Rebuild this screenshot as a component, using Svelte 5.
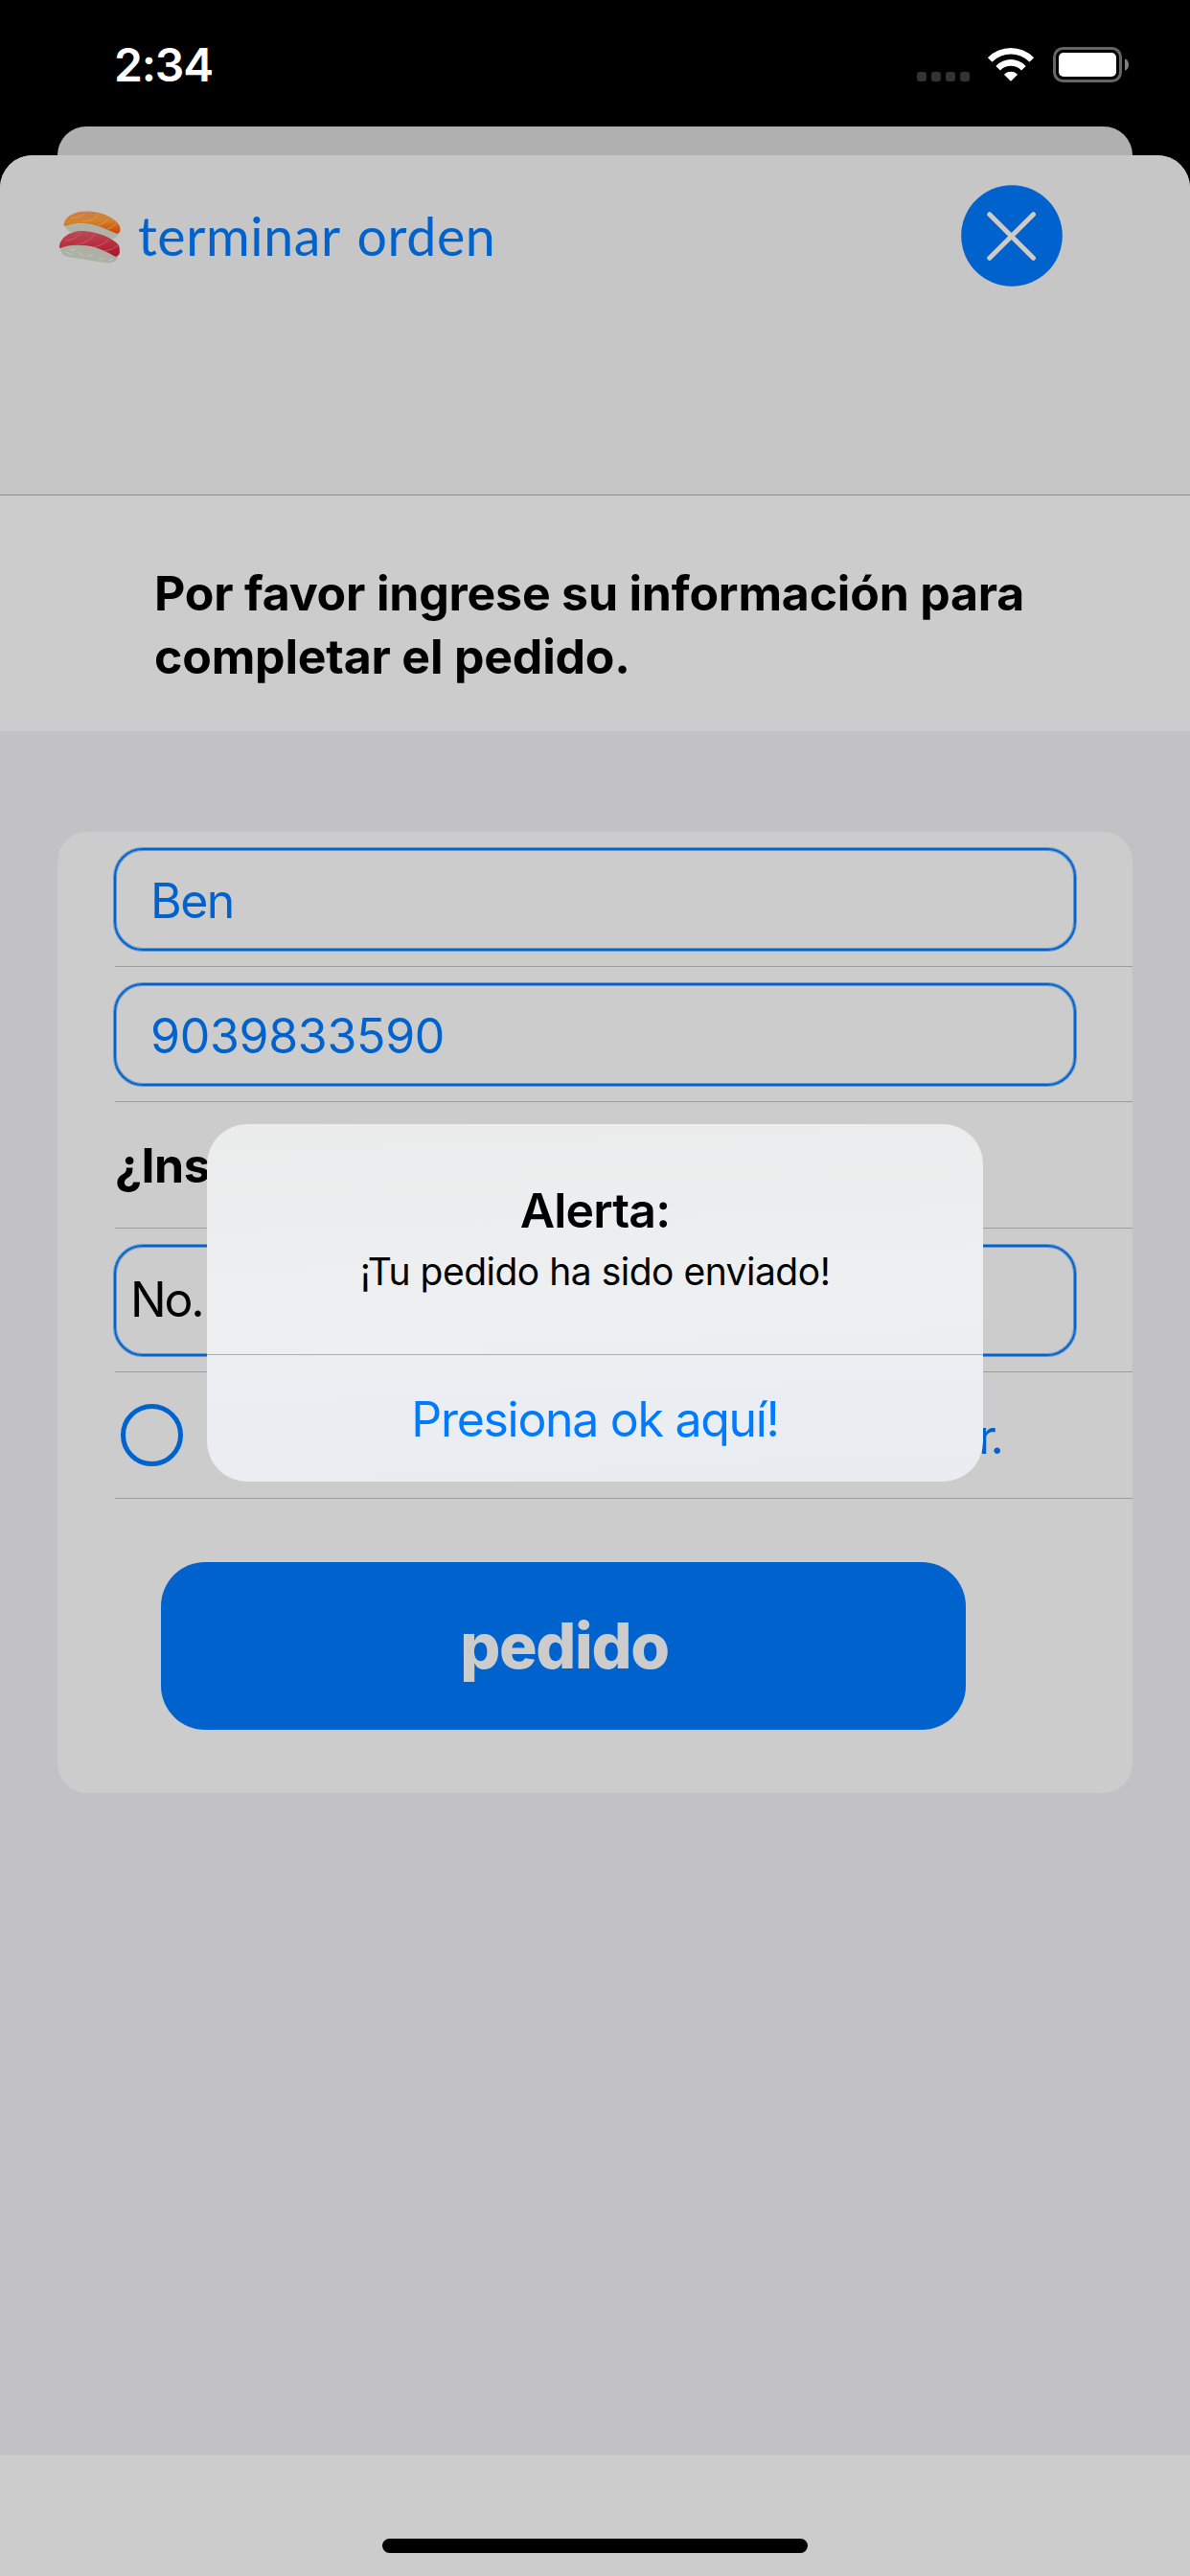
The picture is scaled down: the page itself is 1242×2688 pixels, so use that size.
<script>
  const fields = [
    { kind: 'name', value: 'Ben' },
    { kind: 'phone', value: '9039833590' }
  ];
</script>

<div class="screen">
  <header class="status">
    <span class="time">2:34</span>
    <div class="indicators">
      <div class="dots"><i></i><i></i><i></i><i></i></div>
      <svg class="wifi" width="50" height="38" viewBox="0 0 50 38" aria-hidden="true">
        <path d="M1.4 10.8A33.5 33.5 0 0 1 48.6 10.8Q49.1 11.3 48.6 11.8L45 15.2Q44.5 15.7 44 15.2A27 27 0 0 0 6 15.2Q5.5 15.7 5 15.2L1.4 11.8Q.9 11.3 1.4 10.8Z" />
        <path d="M9.8 19.4A21.3 21.3 0 0 1 40.2 19.4Q40.7 19.9 40.2 20.4L36.5 24Q36 24.5 35.5 24A15.2 15.2 0 0 0 14.5 24Q14 24.5 13.5 24L9.8 20.4Q9.3 19.9 9.8 19.4Z" />
        <path d="M18.4 28.2A10 10 0 0 1 31.6 28.2Q32.1 28.7 31.6 29.2L25.6 35.2Q25 35.8 24.4 35.2L18.4 29.2Q17.9 28.7 18.4 28.2Z" />
      </svg>
      <svg class="battery" width="80" height="38" viewBox="0 0 80 38" aria-hidden="true">
        <rect x="1.5" y="1.5" width="69" height="34" rx="9" fill="none" stroke="#666" stroke-width="3" />
        <rect x="6" y="6" width="60" height="25" rx="5" fill="#fff" />
        <path d="M75 12.2C77.5 13.2 79 15.5 79 18.5S77.5 23.8 75 24.8Z" fill="#808080" />
      </svg>
    </div>
  </header>

  <div class="peek"></div>

  <main class="sheet">
    <section class="bar">
      <div class="brand">
        <svg class="sushi" width="66" height="57" viewBox="0 0 66 57" aria-hidden="true">
          <defs>
            <linearGradient id="salmon" x1="0" y1="0" x2="0.15" y2="1">
              <stop offset="0" stop-color="#c97a55" />
              <stop offset="0.5" stop-color="#d48428" />
              <stop offset="1" stop-color="#cf4c13" />
            </linearGradient>
            <linearGradient id="tuna" x1="0" y1="0" x2="0.15" y2="1">
              <stop offset="0" stop-color="#b94d5a" />
              <stop offset="0.5" stop-color="#bb3344" />
              <stop offset="1" stop-color="#a91b2e" />
            </linearGradient>
          </defs>
          <path d="M7 16C8 23 14 25 26 25L56 30Q62 30 63 22L40 13Z" fill="#b1b3a8" />
          <path d="M6 13C9 5 19 1 31 1.5C47 2 60 9 64 17Q66 24 61 25C50 20 36 13 22 14Q12 15 7 17Q5 17 6 13Z" fill="url(#salmon)" />
          <path d="M13 8Q23 9 28 2M25 12Q38 12 42 4M40 16Q48 15 52 9M51 20Q57 19 60 14" fill="none" stroke="#dc9a58" stroke-width="0.8" />
          <path d="M2 39Q2 48 10 49L48 55Q59 57 62 50L61 46L18 35Z" fill="#adb0a5" />
          <path d="M8 44L15 47M20 44L26 48M31 48L36 47M42 52L47 50M52 53L57 51M12 42L18 41" stroke="#bfc1b8" stroke-width="1.3" />
          <path d="M1 37C3 29 10 23 23 22C39 22 57 29 63 37Q66 47 60 49C49 43 37 37 23 37C14 36 7 38 2 40Q.5 40 1 37Z" fill="url(#tuna)" />
          <path d="M7 32Q17 32 24 23M20 36Q32 34 38 25M36 39Q47 37 52 31M48 43Q56 42 62 37" fill="none" stroke="#c76773" stroke-width="0.8" />
        </svg>
        <span class="brand-name">terminar orden</span>
      </div>
      <button class="close" aria-label="Cerrar">
        <svg width="106" height="106" viewBox="0 0 106 106" aria-hidden="true">
          <circle cx="53" cy="53" r="52.8" fill="#0062cc" />
          <path d="M29.8 30.7L75.5 76.3M75.5 30.7L29.8 76.3" stroke="#ccc" stroke-width="5" stroke-linecap="round" />
        </svg>
      </button>
    </section>

    <section class="intro">
      <h1>Por favor ingrese su información para<br />completar el pedido.</h1>
    </section>

    <section class="form">
      <div class="card">
        {#each fields as field}
          <div class="row"><div class="field {field.kind}">{field.value}</div></div>
        {/each}
        <div class="row question">¿Ins</div>
        <div class="row"><div class="field note">No.</div></div>
        <div class="row choice"><span class="radio"></span><span class="label">r.</span></div>
        <div class="submit"><button class="order">pedido</button></div>
      </div>
    </section>

    <footer class="bottom"><div class="home"></div></footer>
  </main>

  <div class="alert" role="alertdialog" aria-label="Alerta">
    <div class="message">
      <h2>Alerta:</h2>
      <p>¡Tu pedido ha sido enviado!</p>
    </div>
    <button class="ok">Presiona ok aquí!</button>
  </div>
</div>

<style>
  :global(body) { margin: 0; background: #000; }
  * { box-sizing: border-box; }
  button { border: 0; padding: 0; margin: 0; background: none; font: inherit; color: inherit; display: block; }
  h1, h2, p { margin: 0; }

  .screen {
    position: relative;
    width: 1242px;
    height: 2688px;
    display: flex;
    flex-direction: column;
    overflow: hidden;
    background: #000;
    color: #000;
    font-family: Inter, "Liberation Sans", sans-serif;
    font-size: 50px;
    white-space: nowrap;
  }

  .status { height: 132px; flex: none; display: flex; justify-content: space-between; padding: 0 63px 0 119px; color: #fff; }
  .time { font-size: 48px; font-weight: 600; line-height: 60px; padding-top: 38px; letter-spacing: -1.2px; }
  .indicators { display: flex; align-items: flex-start; padding-top: 49px; }
  .dots { display: flex; gap: 5px; padding-top: 26px; }
  .dots i { width: 10px; height: 10px; border-radius: 3px; background: #333; }
  .wifi { margin-left: 18px; fill: #fff; }
  .battery { margin-left: 19px; }

  .peek { flex: none; height: 30px; margin: 0 60px; border-radius: 30px 30px 0 0; background: #b0b0b0; }
  .sheet { flex: 1; display: flex; flex-direction: column; border-radius: 34px 34px 0 0; overflow: hidden; background: #ccc; }

  .bar { flex: none; height: 355px; display: flex; justify-content: space-between; align-items: flex-start; padding: 31px 133px 0 61px; background: #c6c6c6; border-bottom: 1px solid #8e8e8f; }
  .brand { display: flex; align-items: flex-start; padding-top: 26px; }
  .brand-name { margin-left: 17px; margin-top: -6px; font-family: Lato, sans-serif; font-size: 55.5px; line-height: 66px; color: #0062cc; letter-spacing: 0.6px; word-spacing: 3px; }
  .close { width: 106px; height: 106px; }
  .close svg { display: block; }

  .intro { flex: none; height: 246px; padding: 69px 0 0 161px; }
  .intro h1 { font-size: 50px; font-weight: 700; line-height: 66px; letter-spacing: -0.2px; }

  .form { flex: 1; padding: 105px 60px 0; background: #c2c1c6; }
  .card { height: 1003px; border-radius: 31px; background: #ccc; padding-left: 60px; }
  .row { border-bottom: 1px solid #9d9d9f; padding: 17px 59px 16px 0; }
  .field {
    margin-left: -1px;
    width: 1004px;
    height: 107px;
    border: 2px solid #0062cc;
    border-radius: 30px;
    box-shadow: 0 0 0 1px rgba(0, 98, 204, 0.5), inset 0 0 0 1px rgba(0, 98, 204, 0.5);
    padding-left: 36px;
    line-height: 107px;
    color: #0062cc;
    letter-spacing: -0.3px;
  }
  .name { letter-spacing: -1.5px; }
  .note { height: 116px; line-height: 110px; padding-left: 15px; color: #000; letter-spacing: -2.2px; }
  .question { height: 132px; padding-top: 0; line-height: 132px; font-weight: 700; letter-spacing: -0.5px; }
  .choice { height: 132px; display: flex; justify-content: space-between; align-items: center; padding: 0 137px 0 6px; color: #0062cc; }
  .radio { width: 65px; height: 65px; border: 5px solid #0062cc; border-radius: 50%; }
  .label { line-height: 132px; padding-top: 2px; letter-spacing: -3px; }
  .submit { padding: 66px 0 0 48px; }
  .order { width: 840px; height: 175px; border-radius: 46px; background: #0062cc; color: #ccc; font-size: 66px; font-weight: 800; line-height: 175px; text-align: center; letter-spacing: -1.3px; padding-left: 2px; }

  .bottom { flex: none; height: 126px; display: flex; justify-content: center; padding-top: 87px; }
  .home { width: 444px; height: 15px; border-radius: 8px; background: #000; }

  .alert {
    position: absolute;
    left: 216px;
    top: 1173px;
    width: 810px;
    height: 373px;
    border-radius: 42px;
    overflow: hidden;
    background: linear-gradient(178deg, #ebecec 0%, #eeeff1 50%, #ebeff2 68%, #e9edf2 100%);
    text-align: center;
  }
  .message { height: 241px; border-bottom: 1px solid #acb0b3; padding-top: 59px; }
  .message h2 { font-size: 50px; font-weight: 600; line-height: 62px; letter-spacing: -0.8px; }
  .message p { font-size: 39px; line-height: 52px; padding-top: 7px; letter-spacing: -0.5px; }
  .ok { width: 100%; height: 132px; line-height: 134px; color: #007aff; letter-spacing: -1.3px; }
</style>
